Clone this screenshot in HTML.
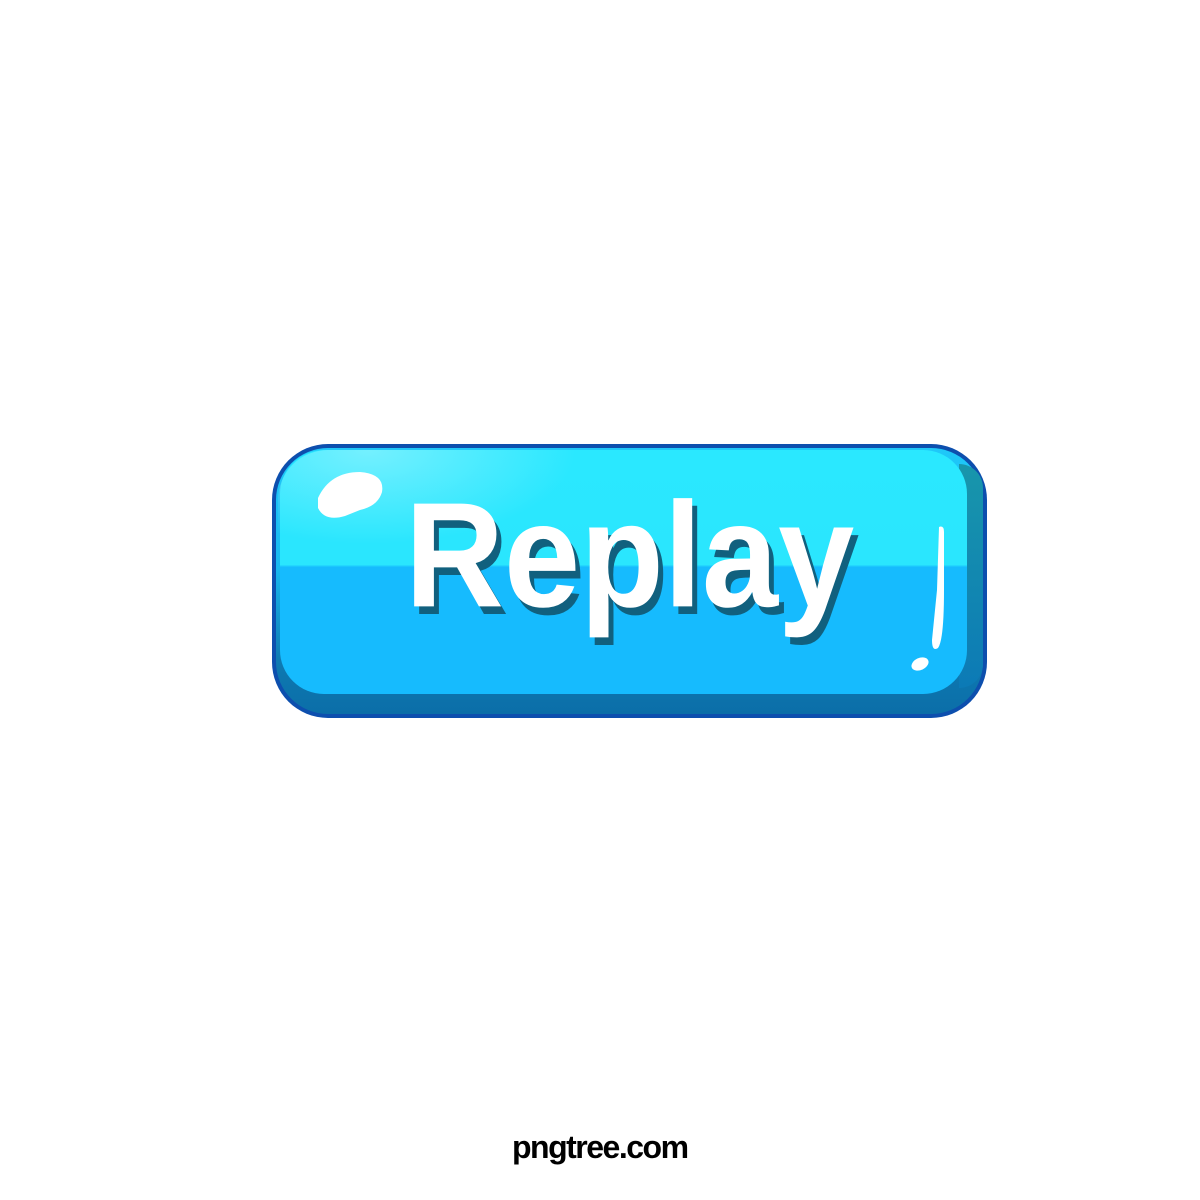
<!DOCTYPE html>
<html><head><style>
html,body{margin:0;padding:0;background:#fff;width:1200px;height:1200px;overflow:hidden;position:relative;font-family:"Liberation Sans",sans-serif}
.btn{position:absolute;left:272px;top:444px;width:715px;height:274px;border-radius:56px;background:#0d4fae;box-sizing:border-box}
.rim{position:absolute;left:4px;top:4px;right:4px;bottom:4px;border-radius:52px;background:linear-gradient(#1fc8f8 0%,#17b8f0 45%,#0e7ab2 80%,#0b6ea8 100%)}
.face{position:absolute;left:8px;top:6px;right:20px;bottom:24px;border-radius:44px;background:linear-gradient(#2ae8ff 0%,#2ae6fe 47%,#16bbfe 48%,#16bbfe 100%)}
.rside{position:absolute;right:4px;top:20px;width:24px;bottom:30px;background:linear-gradient(#1896ab,#0c7ab6);border-radius:0 50px 50px 0}
.gloss{position:absolute;left:6px;top:6px;width:300px;height:95px;border-radius:50px 0 0 0;background:radial-gradient(ellipse at 30% 0%,rgba(255,255,255,.35),rgba(255,255,255,0) 70%)}
.txt{position:absolute;left:405px;top:469px;font-size:137px;font-weight:bold;color:#fff;letter-spacing:0px;transform:scaleY(1.09);transform-origin:top left;text-shadow:5px 7px 0 #11607e;line-height:160px}
.logo{position:absolute;left:512px;top:1129px;font-size:32px;letter-spacing:-1.5px;color:#000;font-weight:bold;font-family:"Liberation Sans",sans-serif}
</style></head><body>
<div class="btn"><div class="rim"></div><div class="rside"></div><div class="face"></div><div class="gloss"></div></div>
<svg style="position:absolute;left:0;top:0" width="1200" height="1200">
<path d="M318 498 Q330 472 360 472 Q385 474 382 492 Q378 506 360 510 L345 516 Q325 522 318 508 Z" fill="#fff"/>
<path d="M939 527 Q944 525 944 532 L944 590 Q944 640 938 648 Q932 652 932 640 L937 590 Z" fill="#fff"/>
<ellipse cx="920" cy="664" rx="9" ry="6" fill="#fff" transform="rotate(-25 920 664)"/>
</svg>
<div class="txt">Replay</div>
<div class="logo">pngtree.com</div>
</body></html>
